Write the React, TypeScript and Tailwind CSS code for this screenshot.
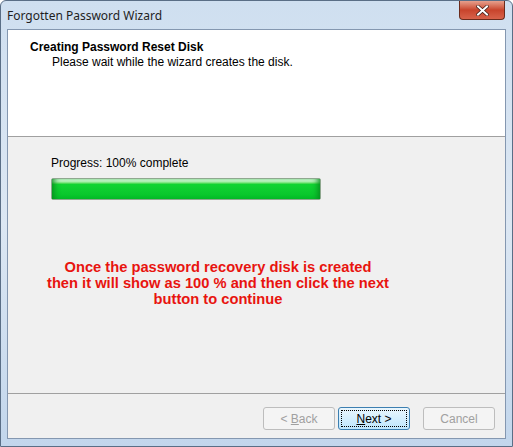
import React from "react";

const Button = ({
  label,
  disabled,
  focused,
}: {
  label: React.ReactNode;
  disabled?: boolean;
  focused?: boolean;
}) => (
  <div
    className={
      "w-[72px] h-[23px] rounded-[3px] border flex items-center justify-center text-[12px] " +
      (disabled
        ? "border-[#bdbdbd] bg-[#f4f4f4] text-[#a0a0a0]"
        : focused
        ? "border-[#3c7fb1] bg-gradient-to-b from-[#eaf6fd] to-[#bee6fd] text-black"
        : "border-[#707070] bg-gradient-to-b from-[#f2f2f2] to-[#dddddd] text-black")
    }
  >
    {focused ? (
      <div className="w-[66px] h-[17px] border border-dotted border-black flex items-center justify-center">
        {label}
      </div>
    ) : (
      label
    )}
  </div>
);

export default function App() {
  return (
    <div
      className="w-[513px] h-[447px] bg-gradient-to-b from-[#cfdff0] via-[#dce7f3] to-[#c2d6ec] rounded-t-[6px] border border-[#5a6e86] flex flex-col overflow-hidden"
      style={{ fontFamily: '"Liberation Sans", Arial, sans-serif' }}
    >
      {/* title bar */}
      <div className="h-[28px] flex items-start shrink-0">
        <div className="pl-[6px] pt-[6px] text-[12px] text-[#1e1e1e]" style={{ fontFamily: '"Noto Sans", "Liberation Sans", sans-serif' }}>
          Forgotten Password Wizard
        </div>
        <div className="ml-auto mr-[7px] w-[46px] h-[19px] rounded-b-[4px] border border-t-0 border-[#6b2b1c] bg-gradient-to-b from-[#e6a08d] via-[#c8442c] to-[#d8624a] flex items-center justify-center">
          <svg width="13" height="11" viewBox="0 0 13 11">
            <path d="M2 1.5 L11 9.5 M11 1.5 L2 9.5" stroke="#3a1a14" strokeWidth="3.4" strokeLinecap="square" />
            <path d="M2 1.5 L11 9.5 M11 1.5 L2 9.5" stroke="#ffffff" strokeWidth="2" strokeLinecap="square" />
          </svg>
        </div>
      </div>

      {/* client */}
      <div className="mx-[6px] mb-[7px] flex-1 flex flex-col border border-[#8497b0] bg-[#f0f0f0]">
        <div className="h-[107px] bg-white border-b border-[#a0a0a0] pl-[22px] pt-[10px] shrink-0">
          <div className="text-[12px] font-bold text-black leading-[15px]">Creating Password Reset Disk</div>
          <div className="pl-[22px] text-[12px] text-black leading-[15px]">Please wait while the wizard creates the disk.</div>
        </div>

        <div className="flex-1 flex flex-col pl-[43px] pt-[19px]">
          <div className="text-[12px] text-black leading-[15px]">Progress: 100% complete</div>
          <div className="mt-[7px] w-[270px] h-[22px] rounded-[2px] border border-[#8fa88f] bg-gradient-to-b from-[#b8f2b8] via-[#0ccc2a] to-[#08b523]">
            <div className="w-full h-full bg-gradient-to-b from-[#c8f7cc] from-10% via-[#12d433] via-25% to-[#06c22a] shadow-[inset_6px_0_6px_-4px_#078a1e,inset_-6px_0_6px_-4px_#078a1e]" />
          </div>
          <div className="mt-[59px] w-[370px] -ml-[18px] text-center text-[14.7px] font-bold text-[#e8140f] leading-[16px]">
            Once the password recovery disk is created
            <br />
            then it will show as 100 % and then click the next
            <br />
            button to continue
          </div>
        </div>

        <div className="h-[45px] border-t border-[#a0a0a0] flex items-start justify-end pt-[13px] pr-[10px] shrink-0">
          <Button
            disabled
            label={
              <span>
                &lt; <span className="underline">B</span>ack
              </span>
            }
          />
          <div className="w-[3px]" />
          <Button
            focused
            label={
              <span>
                <span className="underline">N</span>ext &gt;
              </span>
            }
          />
          <div className="w-[13px]" />
          <Button disabled label="Cancel" />
        </div>
      </div>
    </div>
  );
}
